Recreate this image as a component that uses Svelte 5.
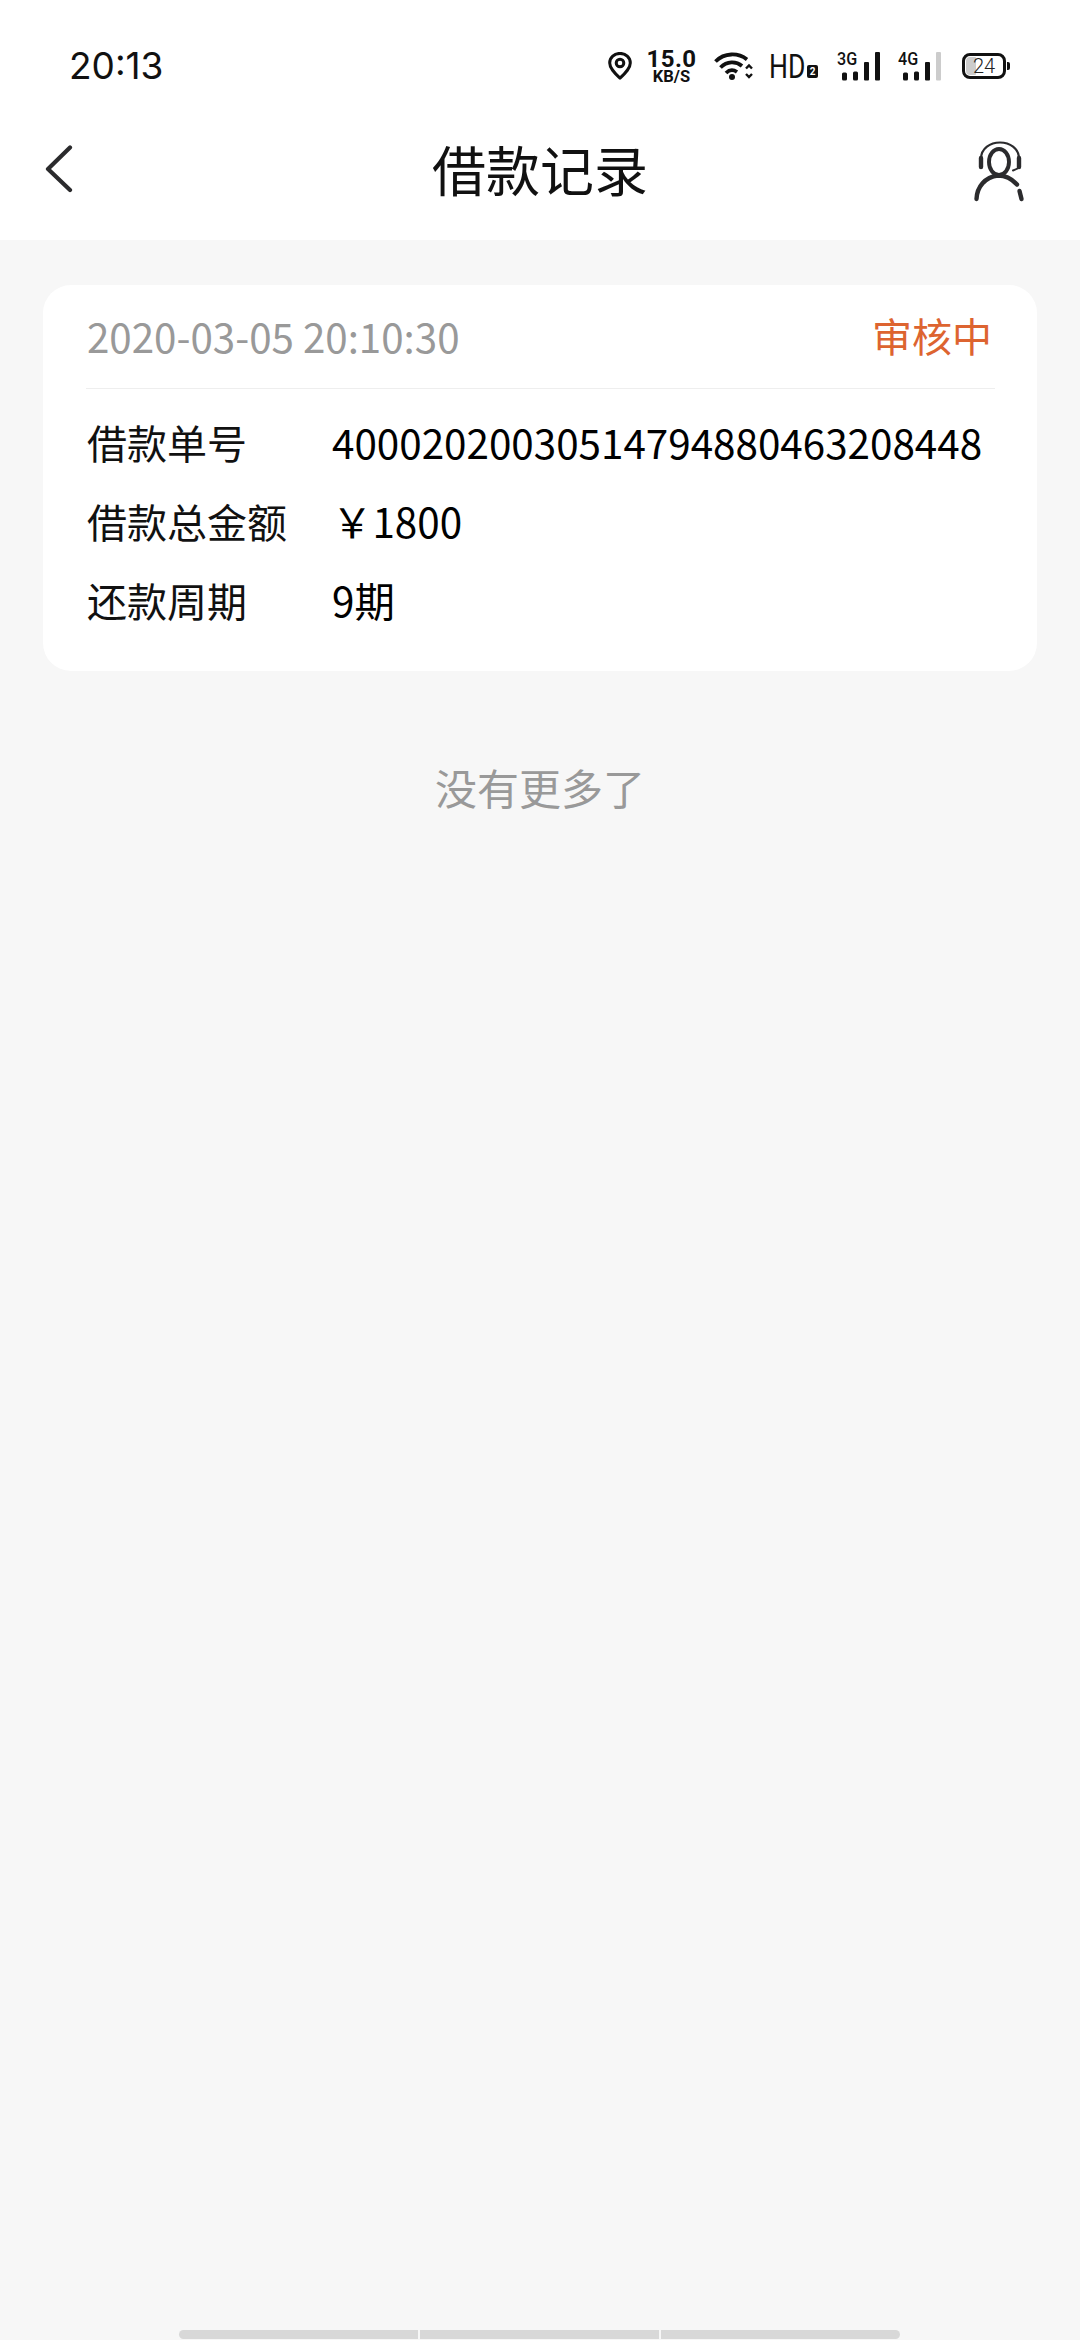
<script>
  const rows = [
    { label: '借款单号', value: '40002020030514794880463208448' },
    { label: '借款总金额', value: '￥1800' },
    { label: '还款周期', value: '9期' }
  ];
</script>

<div class="page">
  <header class="top">
    <div class="status">
      <span class="time">20:13</span>
      <div class="icons">
        <svg class="pin" width="24" height="28" viewBox="0 0 24 28" fill="none" stroke="#111" stroke-width="3">
          <path d="M12 26.2C6 20.5 1.7 16 1.7 11A10.3 9.6 0 0 1 22.3 11C22.3 16 18 20.5 12 26.2Z" stroke-linejoin="round" />
          <circle cx="12" cy="11" r="3.8" />
        </svg>
        <div class="speed"><b>15.0</b><b class="unit">KB/S</b></div>
        <svg class="wifi" width="40" height="28" viewBox="0 0 40 28" fill="none" stroke="#111" stroke-width="3.8">
          <path d="M1.5 9.5C10.5 .5 24 .5 33 7.5" />
          <path d="M6.5 15.500C13 9 22 9 28 14" />
          <path d="M12 21C15.500 17.500 19.500 17.500 23 20" />
          <circle cx="18" cy="25" r="3" fill="#111" stroke="none" />
          <path d="M32 16.500l3-3 3 3M32 22l3 3 3-3" stroke-width="2.400" />
        </svg>
        <span class="hd">HD</span>
        <span class="hd-box">2</span>
        <div class="net three">
          <span class="net-label">3G</span>
          <svg width="43" height="30" viewBox="0 0 43 30" fill="#111">
            <rect x="5" y="20.500" width="5" height="8" rx="1.500" />
            <rect x="16" y="19.500" width="5" height="9" rx="1.500" />
            <rect x="27" y="10" width="5" height="18.500" rx="1" />
            <rect x="38" y="0" width="5" height="28.500" rx="1" />
          </svg>
        </div>
        <div class="net four">
          <span class="net-label">4G</span>
          <svg width="43" height="30" viewBox="0 0 43 30" fill="#111">
            <rect x="5" y="20.500" width="5" height="8" rx="1.500" />
            <rect x="16" y="19.500" width="5" height="9" rx="1.500" />
            <rect x="27" y="10" width="5" height="18.500" rx="1" />
            <rect x="38" y="0" width="5" height="28.500" rx="1" fill="#ccc" />
          </svg>
        </div>
        <div class="battery">
          <span class="charge"></span>
          <span class="level">24</span>
          <span class="tip"></span>
        </div>
      </div>
    </div>
    <nav class="nav">
      <svg class="back" width="30" height="50" viewBox="0 0 30 50" fill="none" stroke="#2b2b2d" stroke-width="4.200" stroke-linecap="round" stroke-linejoin="round">
        <path d="M26 2.500L4 24 26 45" />
      </svg>
      <h1>借款记录</h1>
      <svg class="agent" width="50" height="62" viewBox="0 0 50 62" fill="none" stroke="#2b2b2d" stroke-linecap="round">
        <path d="M7 20C7 -2 45 -2 45 20" stroke-width="2.200" />
        <path d="M7 19V28M45 19V28" stroke-width="4.400" />
        <path d="M45 28C44 29.500 42 30.500 39 31.500" stroke-width="2" />
        <ellipse cx="25" cy="23" rx="10" ry="13" stroke-width="3.900" />
        <path d="M2.500 60C3 48 11 38 24 36.500C32 36.500 38 40 43 45.500" stroke-width="4.400" />
        <path d="M45.500 52L47.500 60" stroke-width="4.400" />
      </svg>
    </nav>
  </header>

  <main class="content">
    <section class="card">
      <div class="card-head">
        <span class="date">2020-03-05 20:10:30</span>
        <span class="state">审核中</span>
      </div>
      <div class="rows">
        {#each rows as row}
          <div class="row">
            <span class="label">{row.label}</span>
            <span>{row.value}</span>
          </div>
        {/each}
      </div>
    </section>
    <p class="end">没有更多了</p>
  </main>

  <div class="home-bar">
    <span></span><span></span><span></span>
  </div>
</div>

<style>
  :global(body) {
    margin: 0;
    background: #f7f7f7;
  }

  .page {
    display: flex;
    flex-direction: column;
    min-height: 2340px;
    font-family: "Noto Sans CJK SC", "Noto Sans", sans-serif;
    color: #111;
  }

  .top {
    background: #fff;
  }

  .status {
    display: flex;
    align-items: center;
    justify-content: space-between;
    box-sizing: border-box;
    height: 100px;
    padding: 32px 74px 0 69px;
  }

  .time {
    font-family: Inter, Roboto, sans-serif;
    font-size: 37px;
    line-height: 68px;
    color: #111;
  }

  .icons {
    display: flex;
    align-items: center;
    height: 68px;
  }

  .speed {
    display: flex;
    flex-direction: column;
    align-items: center;
    margin-left: 17px;
    width: 45px;
    font-family: Roboto, sans-serif;
    font-size: 24px;
    line-height: 18px;
    letter-spacing: .4px;
    padding-top: 2px;
  }

  .speed .unit {
    font-size: 16.500px;
    line-height: 17px;
    letter-spacing: 0;
    white-space: nowrap;
  }

  .wifi {
    margin-left: 20px;
  }

  .hd {
    margin-left: 15px;
    width: 35px;
    font-family: Roboto, sans-serif;
    font-size: 34px;
    line-height: 34px;
    white-space: nowrap;
    transform: scaleX(.78);
    transform-origin: left center;
  }

  .hd-box {
    display: flex;
    align-items: center;
    justify-content: center;
    align-self: flex-start;
    width: 11px;
    height: 13px;
    margin: 33px 0 0 3px;
    background: #111;
    border-radius: 2px;
    color: #fff;
    font: 700 10px/13px Roboto, sans-serif;
  }

  .net {
    position: relative;
    width: 43px;
    height: 30px;
    align-self: flex-start;
    margin-top: 20px;
  }

  .three {
    margin-left: 19px;
  }

  .four {
    margin-left: 18px;
  }

  .net svg {
    position: absolute;
    left: 0;
    top: 0;
  }

  .net-label {
    position: absolute;
    left: 0;
    top: -2px;
    font-family: Roboto, sans-serif;
    font-weight: 500;
    font-size: 19px;
    line-height: 18px;
    white-space: nowrap;
    transform: scaleX(.85);
    transform-origin: left center;
  }

  .battery {
    position: relative;
    box-sizing: border-box;
    width: 44px;
    height: 26px;
    margin-left: 21px;
    border: 3px solid #111;
    border-radius: 8px;
  }

  .charge {
    position: absolute;
    left: 1px;
    top: 1px;
    bottom: 1px;
    width: 10px;
    background: #ccc;
    border-radius: 4px 1px 1px 4px;
  }

  .level {
    position: absolute;
    inset: 0;
    text-align: center;
    font-family: Roboto, sans-serif;
    font-size: 20px;
    font-weight: 300;
    line-height: 20px;
    color: #222;
  }

  .tip {
    position: absolute;
    right: -7px;
    top: 6px;
    width: 3px;
    height: 8px;
    background: #111;
    border-radius: 0 2px 2px 0;
  }

  .nav {
    display: grid;
    grid-template-columns: 1fr auto 1fr;
    align-items: center;
    height: 140px;
    padding: 0 44px;
  }

  .nav h1 {
    margin: 0 0 3px;
    font-size: 54px;
    font-weight: 400;
    line-height: 72px;
    color: #111;
  }

  .back {
    display: block;
  }

  .agent {
    justify-self: end;
    margin-right: 12px;
    overflow: visible;
  }

  .content {
    padding: 45px 43px 0;
  }

  .card {
    background: #fff;
    border-radius: 28px;
    padding: 0 42px 28.500px 43px;
  }

  .card-head {
    display: flex;
    align-items: center;
    justify-content: space-between;
    height: 104px;
    box-sizing: border-box;
    border-bottom: 1px solid #eee;
    padding: 0 3px 3px 1px;
    font-size: 40px;
  }

  .date {
    color: #999;
    font-size: 40.300px;
  }

  .state {
    color: #dd6430;
  }

  .rows {
    padding-top: 16px;
    font-size: 40.400px;
    color: #000;
  }

  .row {
    display: flex;
    height: 79px;
    align-items: center;
    padding: 0 0 6px 1px;
    box-sizing: border-box;
  }

  .label {
    width: 245px;
    font-size: 40px;
    color: #111;
  }

  .end {
    margin: 86px 0 0;
    text-align: center;
    color: #999;
    font-size: 42px;
    line-height: 60px;
  }

  .home-bar {
    display: flex;
    gap: 2px;
    margin: auto 180px 1px 179px;
    height: 9px;
  }

  .home-bar span {
    flex: 1;
    background: #d8d8d8;
  }

  .home-bar span:first-child {
    border-radius: 5px 0 0 5px;
  }

  .home-bar span:last-child {
    border-radius: 0 5px 5px 0;
  }
</style>
